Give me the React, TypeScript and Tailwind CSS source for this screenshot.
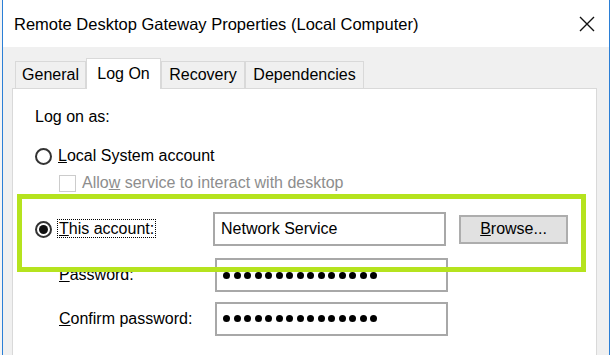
import React from 'react';

const font = { fontFamily: '"Liberation Sans", Arial, sans-serif' };

function Dots() {
    return (
        <div className="flex items-center gap-[3.5px]">
            {Array.from({ length: 15 }).map((_, i) => (
                <span key={i} className="block w-[7px] h-[7px] rounded-full bg-black" />
            ))}
        </div>
    );
}

function TextBox({ children }: { children?: React.ReactNode }) {
    return (
        <div className="w-[233px] h-[34px] bg-white border-2 border-[#a8a8a8] flex items-center pl-[6px] text-[16px] text-black">
            {children}
        </div>
    );
}

function Tab({ label, width, active }: { label: string; width: string; active?: boolean }) {
    if (active) {
        return (
            <div className={`${width} h-[31px] -mb-px bg-white border border-b-0 border-[#d9d9d9] flex items-start justify-center pt-[3px] text-[16px] text-black relative z-10`}>
                {label}
            </div>
        );
    }
    return (
        <div className={`${width} h-[27px] bg-[#f0f0f0] border border-b-0 border-[#d9d9d9] flex items-center justify-center text-[16px] text-black`}>
            {label}
        </div>
    );
}

export default function App() {
    return (
        <div className="w-[610px] h-[355px] overflow-hidden bg-white flex relative" style={font}>
            {/* background window sliver */}
            <div className="w-[2px] bg-[#f4f4f4]" />

            {/* dialog */}
            <div className="flex-1 flex flex-col border-l border-r border-[#2b7fd6]">
                {/* title bar */}
                <div className="h-[47px] bg-white flex items-center justify-between pl-[11px] pr-[12px]">
                    <span className="text-[16.5px] text-black pt-[2px]">
                        Remote Desktop Gateway Properties (Local Computer)
                    </span>
                    <svg width="16" height="16" viewBox="0 0 16 16" className="mr-[2px]">
                        <path d="M1 1 L15 15 M15 1 L1 15" stroke="#111" strokeWidth="1.4" />
                    </svg>
                </div>

                {/* body */}
                <div className="flex-1 bg-[#f0f0f0] flex flex-col pl-[9px] pr-[12px] pt-[11px]">
                    <div className="flex items-end h-[30px] pl-[3px]">
                        <Tab label="General" width="w-[71px]" />
                        <Tab label="Log On" width="w-[75px]" active />
                        <Tab label="Recovery" width="w-[84px]" />
                        <Tab label="Dependencies" width="w-[119px]" />
                    </div>

                    <div className="flex-1 bg-white border border-b-0 border-[#d9d9d9] pl-[22px] text-[16px] text-black">
                        <div className="h-[24px] mt-[16px] flex items-center">Log on as:</div>

                        <div className="h-[24px] mt-[15px] flex items-center">
                            <span className="w-[17px] h-[17px] rounded-full border-2 border-[#333] bg-white" />
                            <span className="ml-[6px]"><u>L</u>ocal System account</span>
                        </div>

                        <div className="h-[18px] mt-[6px] flex items-center pl-[24px]">
                            <span className="w-[17px] h-[17px] border border-[#cccccc] bg-white" />
                            <span className="ml-[6px] text-[#8d8d8d]">Allo<u>w</u> service to interact with desktop</span>
                        </div>

                        <div className="h-[34px] mt-[20px] flex items-center">
                            <span className="w-[17px] h-[17px] rounded-full border-2 border-[#333] bg-white flex items-center justify-center">
                                <span className="w-[9px] h-[9px] rounded-full bg-[#111]" />
                            </span>
                            <span className="ml-[5px] w-[156px]">
                                <span className="border border-dotted border-black px-[1px]"><u>T</u>his account:</span>
                            </span>
                            <TextBox>Network Service</TextBox>
                            <div className="ml-[13px] w-[109px] h-[29px] bg-[#e1e1e1] border-2 border-[#adadad] flex items-center justify-center">
                                <span><u>B</u>rowse...</span>
                            </div>
                        </div>

                        <div className="h-[34px] mt-[12px] flex items-center">
                            <span className="ml-[24px] w-[156px]"><u>P</u>assword:</span>
                            <TextBox><Dots /></TextBox>
                        </div>

                        <div className="h-[35px] mt-[9px] flex items-center">
                            <span className="ml-[24px] w-[156px]"><u>C</u>onfirm password:</span>
                            <TextBox><Dots /></TextBox>
                        </div>
                    </div>
                </div>
            </div>

            {/* highlight annotation */}
            <div className="absolute left-[17px] top-[194px] w-[569px] h-[78px] border-[5px] border-[#b5e31e] pointer-events-none" />
        </div>
    );
}
